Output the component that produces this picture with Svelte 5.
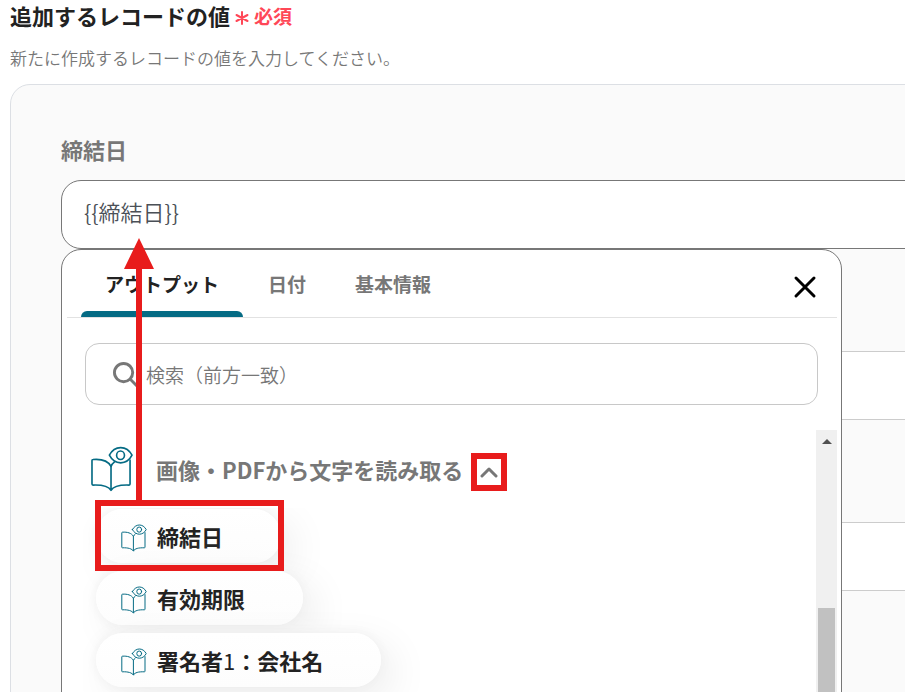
<script lang="ts">
  interface Output {
    name: string;
    index?: string;
    rest?: string;
  }

  const tabs = ['アウトプット', '日付', '基本情報'];

  const outputs: Output[] = [
    { name: '締結日' },
    { name: '有効期限' },
    { name: '署名者', index: '1', rest: '：会社名' }
  ];

  let activeTab = $state(0);
  let expanded = $state(true);
  let dueDate = $state('{{締結日}}');
  let keyword = $state('');
</script>

{#snippet bookIcon()}
  <svg class="book" viewBox="32 47 128 140" fill="none" stroke="currentColor" stroke-linecap="round" stroke-linejoin="round" aria-hidden="true">
    <path d="M93 182C86 170 66 165 38 166Q35 166 35 163V91Q35 88 38 88C62 86 84 92 93 109V182C100 170 118 165 148 166Q151 166 151 163V90" />
    <path d="M93 109Q96 101 103 96" />
    <path d="M88 75C104 44 141 44 157 75C141 106 104 106 88 75Z" />
    <ellipse cx="122" cy="75" rx="12" ry="13" />
  </svg>
{/snippet}

<div class="page">
  <h2 class="title">追加するレコードの値 <span class="required"><svg class="asterisk" viewBox="0 0 14 14" aria-hidden="true"><path d="M7 1V13M1.5 4L12.5 10M12.5 4L1.5 10" /></svg>必須</span></h2>
  <p class="description">新たに作成するレコードの値を入力してください。</p>

  <section class="record">
    <label class="field-label" for="due-date">締結日</label>
    <div class="field">
      <input id="due-date" class="text-input focused" type="text" bind:value={dueDate} />

      <div class="menu">
        <div class="menu-head">
          <div class="tabs" role="tablist">
            {#each tabs as tab, i}
              <button class="tab" class:active={activeTab === i} type="button" role="tab" aria-selected={activeTab === i} onclick={() => (activeTab = i)}>{tab}</button>
            {/each}
          </div>
          <button class="close" type="button" aria-label="閉じる">
            <svg viewBox="0 0 24 24" aria-hidden="true"><path d="M3 3L21 21M21 3L3 21" /></svg>
          </button>
        </div>

        <label class="search">
          <svg class="search-icon" viewBox="0 0 26 26" aria-hidden="true">
            <circle cx="11" cy="11" r="9.5" />
            <path d="M18 18L25 25" />
          </svg>
          <input type="text" placeholder="検索（前方一致）" aria-label="検索" bind:value={keyword} />
        </label>

        <div class="results">
          <div class="group">
            <div class="group-head">
              {@render bookIcon()}
              <span class="group-name">画像・PDFから文字を読み取る</span>
              <button class="toggle" type="button" aria-label="開閉" aria-expanded={expanded} onclick={() => (expanded = !expanded)}>
                <svg viewBox="0 0 18 12" aria-hidden="true"><path d="M2 10L9 3L16 10" /></svg>
              </button>
            </div>

            {#if expanded}
              <div class="chips">
                {#each outputs as output}
                  <button class="chip" type="button">
                    {@render bookIcon()}
                    <span>{output.name}{#if output.index}<span class="index">{output.index}</span>{/if}{output.rest ?? ''}</span>
                  </button>
                {/each}
              </div>
            {/if}
            <div class="marker" aria-hidden="true"></div>
          </div>

          <div class="scrollbar" aria-hidden="true">
            <svg class="scroll-up" viewBox="0 0 10 5"><path d="M0 5L5 0L10 5Z" /></svg>
            <div class="thumb"></div>
          </div>
        </div>

        <svg class="arrow" viewBox="0 0 32 266" aria-hidden="true">
          <path d="M16 0L31 31H19V266H13V31H1Z" />
        </svg>
      </div>
    </div>

    <input class="text-input" type="text" aria-label="項目2" />
    <input class="text-input" type="text" aria-label="項目3" />
  </section>
</div>

<style>
  :global(body) {
    margin: 0;
    background: #fff;
  }

  .page {
    box-sizing: border-box;
    height: 100vh;
    padding-left: 10px;
    overflow: hidden;
    font-family: 'Noto Sans CJK JP', 'Noto Sans', sans-serif;
    color: #222;
  }

  button,
  input {
    font-family: inherit;
  }

  button {
    border: 0;
    background: none;
    cursor: pointer;
  }

  .title {
    display: flex;
    align-items: center;
    gap: 5px;
    margin: 0 0 17px;
    font-size: 22px;
    font-weight: 700;
    line-height: 28px;
  }

  .required {
    display: flex;
    align-items: center;
    gap: 5px;
    padding-top: 3px;
    color: #ff4757;
    font-size: 19px;
    line-height: 26px;
  }

  .asterisk {
    width: 14px;
    height: 14px;
    margin-top: 4px;
    stroke: currentColor;
    stroke-width: 2;
    stroke-linecap: round;
  }

  .description {
    margin: 0 0 14px;
    color: #777;
    font-size: 17px;
    font-weight: 350;
    line-height: 24px;
  }

  .record {
    display: flex;
    flex-direction: column;
    margin-right: -60px;
    padding: 48px 0 80px 50px;
    border: 1px solid #dcdfe4;
    border-radius: 20px;
    background: #fafafa;
  }

  .field-label {
    margin-bottom: 15px;
    color: #777;
    font-size: 22px;
    font-weight: 700;
    line-height: 32px;
  }

  .field {
    position: relative;
  }

  .text-input {
    box-sizing: border-box;
    display: block;
    width: 100%;
    height: 69px;
    margin-bottom: 102px;
    padding: 0 22px 8px;
    border: 1px solid #ccc;
    border-radius: 20px;
    outline: 0;
    background: #fff;
    color: #4b5057;
    font-size: 22px;
    font-weight: 350;
  }

  .text-input.focused {
    border-color: #777;
  }

  .menu {
    position: absolute;
    z-index: 1;
    top: 69px;
    left: 0;
    box-sizing: border-box;
    width: 100%;
    max-width: 781px;
    border: 1px solid #777;
    border-radius: 20px;
    background: #fff;
  }

  .menu-head {
    display: flex;
    align-items: flex-end;
    justify-content: space-between;
    height: 67px;
    margin: 0 4px 0 5px;
    padding: 0 14px;
    border-bottom: 1px solid #e2e2e2;
  }

  .tabs {
    display: flex;
    gap: 1px;
  }

  .tab {
    position: relative;
    height: 67px;
    padding: 0 24px;
    color: #777;
    font-size: 19px;
    font-weight: 700;
    line-height: 28px;
  }

  .tab.active {
    color: #222;
  }

  .tab.active::after {
    content: '';
    position: absolute;
    right: 0;
    bottom: 0;
    left: 0;
    height: 6px;
    border-radius: 6px 6px 0 0;
    background: #056b84;
  }

  .close {
    width: 36px;
    height: 60px;
    padding: 6px;
  }

  .close svg {
    display: block;
    width: 24px;
    height: 24px;
    stroke: #000;
    stroke-width: 3;
    stroke-linecap: round;
  }

  .search {
    display: flex;
    align-items: center;
    gap: 8px;
    box-sizing: border-box;
    height: 62px;
    margin: 25px 23px;
    padding: 0 27px;
    border: 1px solid #c8c8c8;
    border-radius: 14px;
  }

  .search-icon {
    flex: none;
    width: 25px;
    height: 25px;
    fill: none;
    stroke: #777;
    stroke-width: 3;
    stroke-linecap: round;
  }

  .search input {
    flex: 1;
    min-width: 0;
    padding: 0;
    border: 0;
    outline: 0;
    background: none;
    color: #4b5057;
    font-size: 19px;
    font-weight: 350;
  }

  .search input::placeholder {
    color: #777;
    opacity: 1;
  }

  .results {
    display: flex;
    height: 400px;
    margin: 0 4px 20px 21px;
    overflow: hidden;
  }

  .group {
    position: relative;
    flex: 1;
  }

  .group-head {
    display: flex;
    align-items: center;
    height: 78px;
    padding-left: 8px;
  }

  .book {
    flex: none;
    color: #056b84;
  }

  .group-head .book {
    width: 42px;
    height: 46px;
    margin-right: 23px;
    stroke-width: 5;
  }

  .group-name {
    color: #777;
    font-size: 22px;
    font-weight: 700;
    line-height: 32px;
  }

  .toggle {
    display: flex;
    align-items: center;
    justify-content: center;
    box-sizing: border-box;
    width: 36px;
    height: 38px;
    margin: 6px 0 0 8px;
    padding: 0;
    border: 6px solid #e81c1c;
  }

  .toggle svg {
    width: 18px;
    height: 12px;
    fill: none;
    stroke: #777;
    stroke-width: 3;
    stroke-linecap: round;
    stroke-linejoin: round;
  }

  .chips {
    display: flex;
    flex-direction: column;
    align-items: flex-start;
    gap: 8px;
    height: 320px;
    padding: 1px 0 0 13px;
    overflow: hidden;
  }

  .chip {
    display: flex;
    align-items: center;
    gap: 10px;
    height: 54px;
    padding: 0 58px 0 25px;
    border-radius: 27px;
    background: linear-gradient(#fff, #fdfdfd);
    box-shadow: 12px 12px 40px #ececec, 0 0 12px #f2f2f2;
    color: #222;
    font-size: 22px;
    font-weight: 700;
  }

  .chip .book {
    width: 26px;
    height: 28px;
    margin-top: 4px;
    stroke-width: 5;
  }

  .index {
    font-weight: 400;
  }

  .marker {
    position: absolute;
    top: 70px;
    left: 12px;
    box-sizing: border-box;
    width: 189px;
    height: 71px;
    border: 6px solid #e81c1c;
  }

  .scrollbar {
    display: flex;
    flex-direction: column;
    align-items: center;
    width: 21px;
    background: #f0f0f0;
  }

  .scroll-up {
    width: 10px;
    height: 5px;
    margin: 9px 0 164px;
    fill: #505050;
  }

  .thumb {
    width: 17px;
    flex: 1;
    background: #c1c1c1;
  }

  .arrow {
    position: absolute;
    top: -12px;
    left: 61px;
    width: 32px;
    height: 266px;
    fill: #e81c1c;
  }
</style>
